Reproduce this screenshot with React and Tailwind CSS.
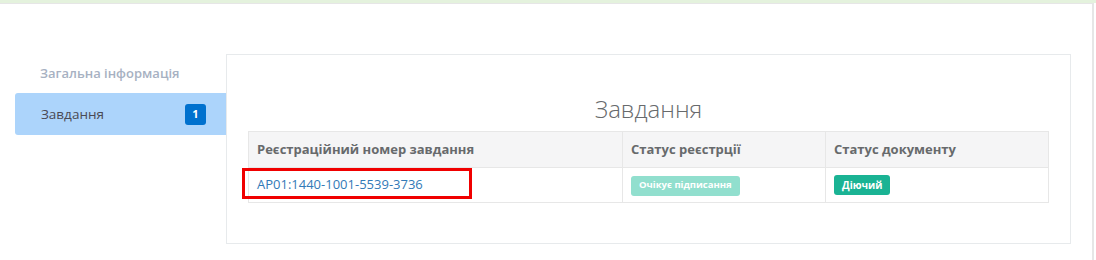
import React from 'react';

export default function App() {
  return (
    <div className="w-[1096px] h-[260px] bg-white overflow-hidden font-['Open_Sans',sans-serif] text-[13px] text-[#676a6c]">
      <div className="h-[3px] bg-[#e4f2dd]" />
      <div className="w-[1094px] h-[257px] border-t border-r-2 border-[#e6e6e6] pt-[50px] pl-[15px] flex">
        {/* sidebar */}
        <div className="w-[211px] shrink-0">
          <div className="h-[39px] flex items-center pl-[25px] text-[#a7b1c2] font-semibold">
            Загальна інформація
          </div>
          <div className="h-[42px] flex items-center justify-between pl-[26px] pr-[20px] bg-[#acd4fb] rounded-l-[3px] text-[#4a4a55]">
            <span className="text-[13.5px]">Завдання</span>
            <span className="w-[21px] h-[21px] rounded-[3px] bg-[#0071ce] text-white text-[11px] font-bold flex items-center justify-center">
              1
            </span>
          </div>
        </div>

        {/* card */}
        <div className="w-[845px] h-[190px] bg-white border border-[#e7eaec] px-[21px] pt-[41px]">
          <h2 className="text-[24px] leading-[26px] font-light text-[#676a6c] text-center mb-[9px]">
            Завдання
          </h2>
          <div className="relative">
            <table className="w-full border-collapse">
              <thead>
                <tr className="bg-[#f5f5f6] h-[36px]">
                  <th className="w-[374px] border border-[#e7e7e7] px-[8px] text-left font-bold">Реєстраційний номер завдання</th>
                  <th className="w-[203px] border border-[#e7e7e7] px-[8px] text-left font-bold">Статус реєстрції</th>
                  <th className="border border-[#e7e7e7] px-[8px] text-left font-bold">Статус документу</th>
                </tr>
              </thead>
              <tbody>
                <tr className="h-[35px]">
                  <td className="border border-[#e7e7e7] px-[8px]">
                    <a className="text-[#337ab7]">AP01:1440-1001-5539-3736</a>
                  </td>
                  <td className="border border-[#e7e7e7] px-[8px]">
                    <span className="inline-flex items-center h-[20px] px-[8px] rounded-[3px] bg-[#91dfce] text-white text-[9.5px] font-bold">
                      Очікує підписання
                    </span>
                  </td>
                  <td className="border border-[#e7e7e7] px-[8px]">
                    <span className="inline-flex items-center h-[20px] px-[8px] rounded-[3px] bg-[#1ab394] text-white text-[10px] font-bold">
                      Діючий
                    </span>
                  </td>
                </tr>
              </tbody>
            </table>
            {/* annotation highlight */}
            <div className="absolute left-[-6px] top-[37px] w-[230px] h-[31px] border-[3px] border-[#f00000]" />
          </div>
        </div>
      </div>
    </div>
  );
}
